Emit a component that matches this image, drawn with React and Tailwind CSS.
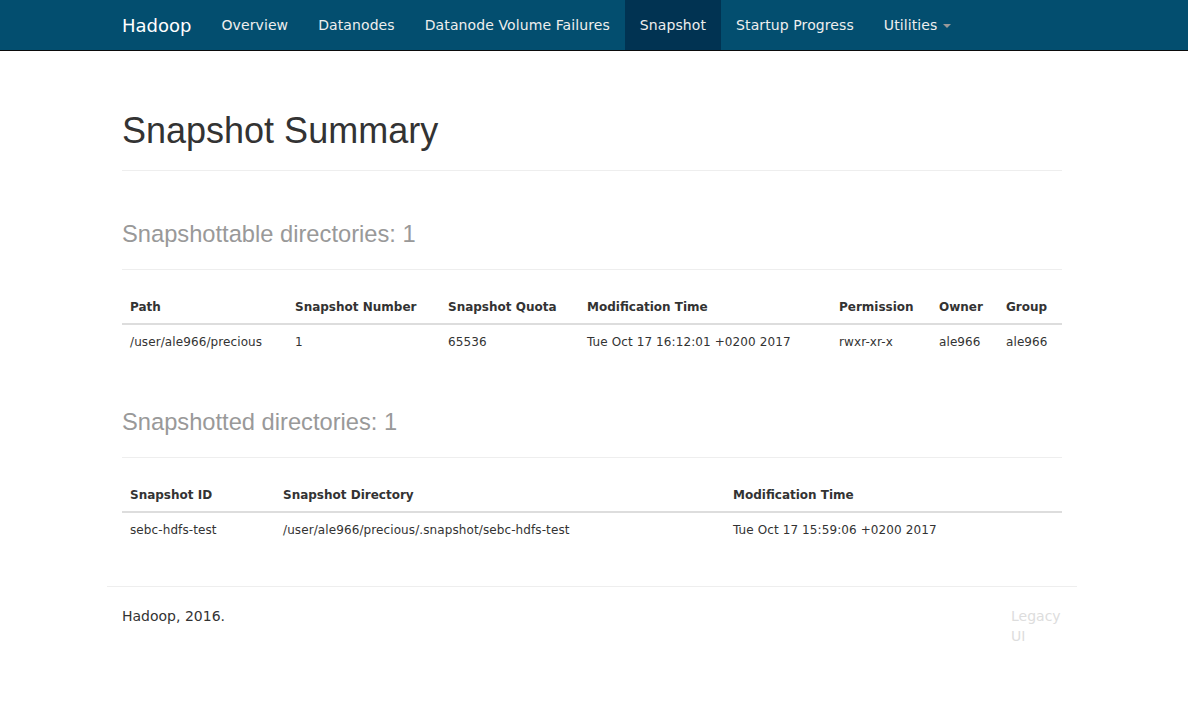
import React from 'react';

const navItems = ['Overview', 'Datanodes', 'Datanode Volume Failures', 'Snapshot', 'Startup Progress'];

const snapshottable = {
  cols: [
    { name: 'Path', w: 'w-[165px]' },
    { name: 'Snapshot Number', w: 'w-[153px]' },
    { name: 'Snapshot Quota', w: 'w-[139px]' },
    { name: 'Modification Time', w: 'w-[252px]' },
    { name: 'Permission', w: 'w-[100px]' },
    { name: 'Owner', w: 'w-[67px]' },
    { name: 'Group', w: 'w-[64px]' },
  ],
  rows: [['/user/ale966/precious', '1', '65536', 'Tue Oct 17 16:12:01 +0200 2017', 'rwxr-xr-x', 'ale966', 'ale966']],
};

const snapshotted = {
  cols: [
    { name: 'Snapshot ID', w: 'w-[153px]' },
    { name: 'Snapshot Directory', w: 'w-[450px]' },
    { name: 'Modification Time', w: 'w-[337px]' },
  ],
  rows: [['sebc-hdfs-test', '/user/ale966/precious/.snapshot/sebc-hdfs-test', 'Tue Oct 17 15:59:06 +0200 2017']],
};

function SectionHeader({ title }) {
  return (
    <div className="mt-[50px] pb-[22px] border-b border-[#eeeeee]">
      <h2 className="font-['Liberation_Sans',Arial,sans-serif] text-[23.7px] leading-[26px] text-[#999999]">{title}</h2>
    </div>
  );
}

function DataTable({ data }) {
  return (
    <table className="mt-5 mb-[2px] w-full table-fixed border-collapse text-[12px] leading-[17px] text-[#333333]">
      <thead>
        <tr>
          {data.cols.map((c) => (
            <th key={c.name} className={`${c.w} text-left font-bold px-2 pt-[9px] pb-[7px] border-b-2 border-[#dddddd]`}>
              {c.name}
            </th>
          ))}
        </tr>
      </thead>
      <tbody>
        {data.rows.map((r, i) => (
          <tr key={i}>
            {r.map((v, j) => (
              <td key={j} className="px-2 pt-[9px] pb-2 whitespace-nowrap tracking-[0.1px]">{v}</td>
            ))}
          </tr>
        ))}
      </tbody>
    </table>
  );
}

export default function App() {
  return (
    <div className="min-h-[711px] bg-white font-['DejaVu_Sans',sans-serif] text-[14px] text-[#333333]">
      {/* navbar */}
      <div className="h-[51px] bg-[#034e6f] border-b border-[#0b0b0b]">
        <div className="ml-[107px] w-[970px] flex items-stretch h-[50px]">
          <a className="px-[15px] flex items-center text-[18px] text-white">Hadoop</a>
          {navItems.map((n) => (
            <a
              key={n}
              className={`px-[15px] flex items-center text-[14px] tracking-[0.1px] text-[#eeeeee] ${n === 'Snapshot' ? 'bg-[#013352]' : ''}`}
            >
              {n}
            </a>
          ))}
          <a className="px-[15px] flex items-center text-[14px] tracking-[0.1px] text-[#eeeeee] gap-[6px]">
            Utilities
            <span className="inline-block w-0 h-0 border-x-[4px] border-x-transparent border-t-[4px] border-t-[#999999] mt-[2px]"></span>
          </a>
        </div>
      </div>

      <div className="ml-[107px] w-[970px] px-[15px]">
        {/* page header */}
        <div className="pt-[60px] pb-[19px] border-b border-[#eeeeee]">
          <h1 className="font-['Liberation_Sans',Arial,sans-serif] text-[36px] leading-[40px] text-[#333333]">
            Snapshot Summary
          </h1>
        </div>

        <SectionHeader title="Snapshottable directories: 1" />
        <DataTable data={snapshottable} />

        <SectionHeader title="Snapshotted directories: 1" />
        <DataTable data={snapshotted} />
      </div>

      {/* footer */}
      <div className="ml-[107px] w-[970px]">
        <hr className="mt-[39px] border-t border-[#eeeeee]" />
        <div className="flex justify-between px-[15px] mt-[19px] leading-[20px]">
          <p>Hadoop, 2016.</p>
          <p className="w-[51px] text-[#dddddd]">Legacy UI</p>
        </div>
      </div>
    </div>
  );
}
